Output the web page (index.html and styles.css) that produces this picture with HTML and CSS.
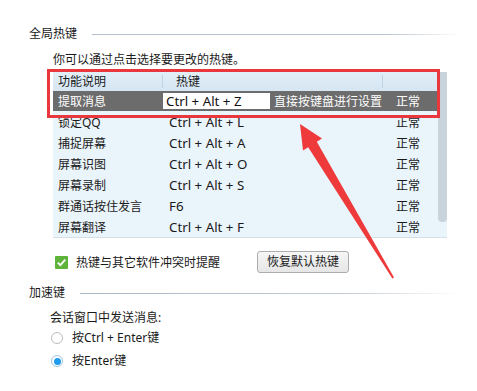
FILE: index.html
```html
<!DOCTYPE html>
<html>
<head>
<meta charset="utf-8">
<link rel="stylesheet" href="styles.css">
</head>
<body>
<div class="page">
  <div class="section-head sh1"><span class="label">全局热键</span><i class="rule"></i></div>
  <div class="desc">你可以通过点击选择要更改的热键。</div>
  <div class="table">
    <div class="rows">
      <div class="row head"><div class="c1">功能说明</div><div class="c2">热键</div><div class="c3"></div></div>
      <div class="row sel"><div class="c1">提取消息</div><div class="c2"><span class="input key">Ctrl + Alt + Z</span><span class="hint">直接按键盘进行设置</span></div><div class="c3">正常</div></div>
      <div class="row"><div class="c1">锁定QQ</div><div class="c2 key">Ctrl + Alt + L</div><div class="c3">正常</div></div>
      <div class="row"><div class="c1">捕捉屏幕</div><div class="c2 key">Ctrl + Alt + A</div><div class="c3">正常</div></div>
      <div class="row"><div class="c1">屏幕识图</div><div class="c2 key">Ctrl + Alt + O</div><div class="c3">正常</div></div>
      <div class="row"><div class="c1">屏幕录制</div><div class="c2 key">Ctrl + Alt + S</div><div class="c3">正常</div></div>
      <div class="row"><div class="c1">群通话按住发言</div><div class="c2 key">F6</div><div class="c3">正常</div></div>
      <div class="row"><div class="c1">屏幕翻译</div><div class="c2 key">Ctrl + Alt + F</div><div class="c3">正常</div></div>
    </div>
    <div class="scroll"><div class="thumb"></div></div>
  </div>
  <div class="opts">
    <div class="check"><span class="box"><svg width="13" height="13" viewBox="0 0 13 13"><path d="M2.8 6.6 L5.3 9.1 L10.3 3.6" fill="none" stroke="#fff" stroke-width="1.8"/></svg></span><span>热键与其它软件冲突时提醒</span></div>
    <div class="btn">恢复默认热键</div>
  </div>
  <div class="section-head sh2"><span class="label">加速键</span><i class="rule"></i></div>
  <div class="sub">会话窗口中发送消息:</div>
  <div class="radio r1"><span class="dot"></span><span>按Ctrl + Enter键</span></div>
  <div class="radio r2 on"><span class="dot"></span><span>按Enter键</span></div>
</div>
<div class="annot-box"></div>
<svg class="arrow" width="477" height="391" viewBox="0 0 477 391">
  <polygon points="300,124 322,138.6 316.8,141.8 394,277.4 392.4,278.6 308.2,147.2 303,150.4" fill="#ee3a3a"/>
</svg>
</body>
</html>
```

FILE: styles.css
```css
html, body {
  margin: 0;
  padding: 0;
  background: #fff;
}
body {
  width: 477px;
  height: 391px;
  overflow: hidden;
  position: relative;
  font-family: "Noto Sans", "Noto Sans CJK SC", sans-serif;
  font-size: 12px;
  color: #1a1a1a;
}
.page {
  padding-top: 26px;
  display: flex;
  flex-direction: column;
}
.section-head {
  display: flex;
  align-items: center;
  height: 16px;
  line-height: 16px;
  padding-left: 29px;
  width: 431px;
}
.section-head .label {
  white-space: nowrap;
}
.section-head .rule {
  flex: 1;
  height: 1px;
  margin-left: 15px;
  background: linear-gradient(to right, #b3bfcc 0%, #b8c3cf 80%, rgba(200,210,220,0) 100%);
}
.desc {
  margin-top: 10px;
  margin-left: 53px;
  height: 16px;
  line-height: 16px;
}
.table {
  margin-top: 4px;
  margin-left: 53px;
  width: 394px;
  height: 166px;
  display: flex;
  background: #eaf4fb;
  border-bottom: 1px solid #d4dfe8;
  box-sizing: border-box;
}
.rows {
  width: 385px;
  display: flex;
  flex-direction: column;
}
.row {
  display: flex;
  height: 21px;
  line-height: 21px;
  align-items: center;
  white-space: nowrap;
}
.row .c1 {
  width: 104px;
  padding-left: 5px;
}
.row .c2 {
  width: 213px;
  padding-left: 7px;
  display: flex;
  align-items: center;
}
.key {
  font-size: 13.3px;
}
.row .c3 {
  flex: 1;
  padding-left: 14px;
}
.row.head {
  height: 19px;
  line-height: 19px;
  background: linear-gradient(#e2eef8, #d6e6f2);
}
.row.head .c2 {
  padding-left: 13px;
  width: 206px;
  border-left: 1px solid #bfd3e3;
  height: 13px;
  line-height: 13px;
}
.row.head .c3 {
  border-left: 1px solid #bfd3e3;
  height: 13px;
}
.row.sel {
  background: #6c6c6c;
  color: #fff;
  height: 20px;
  margin-bottom: 1px;
}
.row.sel .c2 {
  padding-left: 1px;
  width: 219px;
}
.input {
  background: #fff;
  color: #111;
  height: 16px;
  line-height: 16px;
  padding-left: 3px;
  box-sizing: border-box;
  width: 109px;
}
.hint {
  margin-left: 4px;
  color: #fff;
}
.scroll {
  width: 9px;
  background: #eaf4fb;
}
.thumb {
  width: 9px;
  height: 150px;
  background: #c9d3db;
  border-radius: 0 0 4px 4px;
}
.opts {
  margin-top: 13px;
  display: flex;
  align-items: center;
  height: 22px;
}
.check {
  display: flex;
  align-items: center;
  margin-left: 55px;
  width: 202px;
}
.check .box {
  width: 13px;
  height: 13px;
  background: #5eb33b;
  border-radius: 1px;
  margin-right: 8px;
  display: flex;
}
.btn {
  width: 92px;
  height: 22px;
  box-sizing: border-box;
  border: 1px solid #acacac;
  border-radius: 3px;
  background: linear-gradient(#f6f6f6, #e6e6e6);
  text-align: center;
  line-height: 20px;
  color: #1a1a1a;
}
.sh2 {
  margin-top: 12px;
}
.sh2 .rule {
  background: linear-gradient(to right, #a9b6c4 0%, #c2cbd5 70%, rgba(220,226,232,0) 100%);
}
.sub {
  margin-top: 9px;
  margin-left: 50px;
  height: 16px;
  line-height: 16px;
}
.radio {
  display: flex;
  align-items: center;
  margin-left: 51px;
  height: 20px;
  line-height: 20px;
}
.r1 { margin-top: 2px; }
.r2 { margin-top: 3px; }
.radio .dot {
  width: 12px;
  height: 12px;
  box-sizing: border-box;
  border: 1px solid #bcbcbc;
  border-radius: 50%;
  background: #fff;
  margin-right: 9px;
  display: flex;
  align-items: center;
  justify-content: center;
}
.radio.on .dot {
  border-color: #9ec4e4;
}
.radio.on .dot::after {
  content: "";
  width: 7px;
  height: 7px;
  border-radius: 50%;
  background: #1e9bf0;
}
.annot-box {
  position: absolute;
  left: 47px;
  top: 69px;
  width: 393px;
  height: 49px;
  box-sizing: border-box;
  border: 3px solid #e8373d;
}
.arrow {
  position: absolute;
  left: 0;
  top: 0;
}
```
